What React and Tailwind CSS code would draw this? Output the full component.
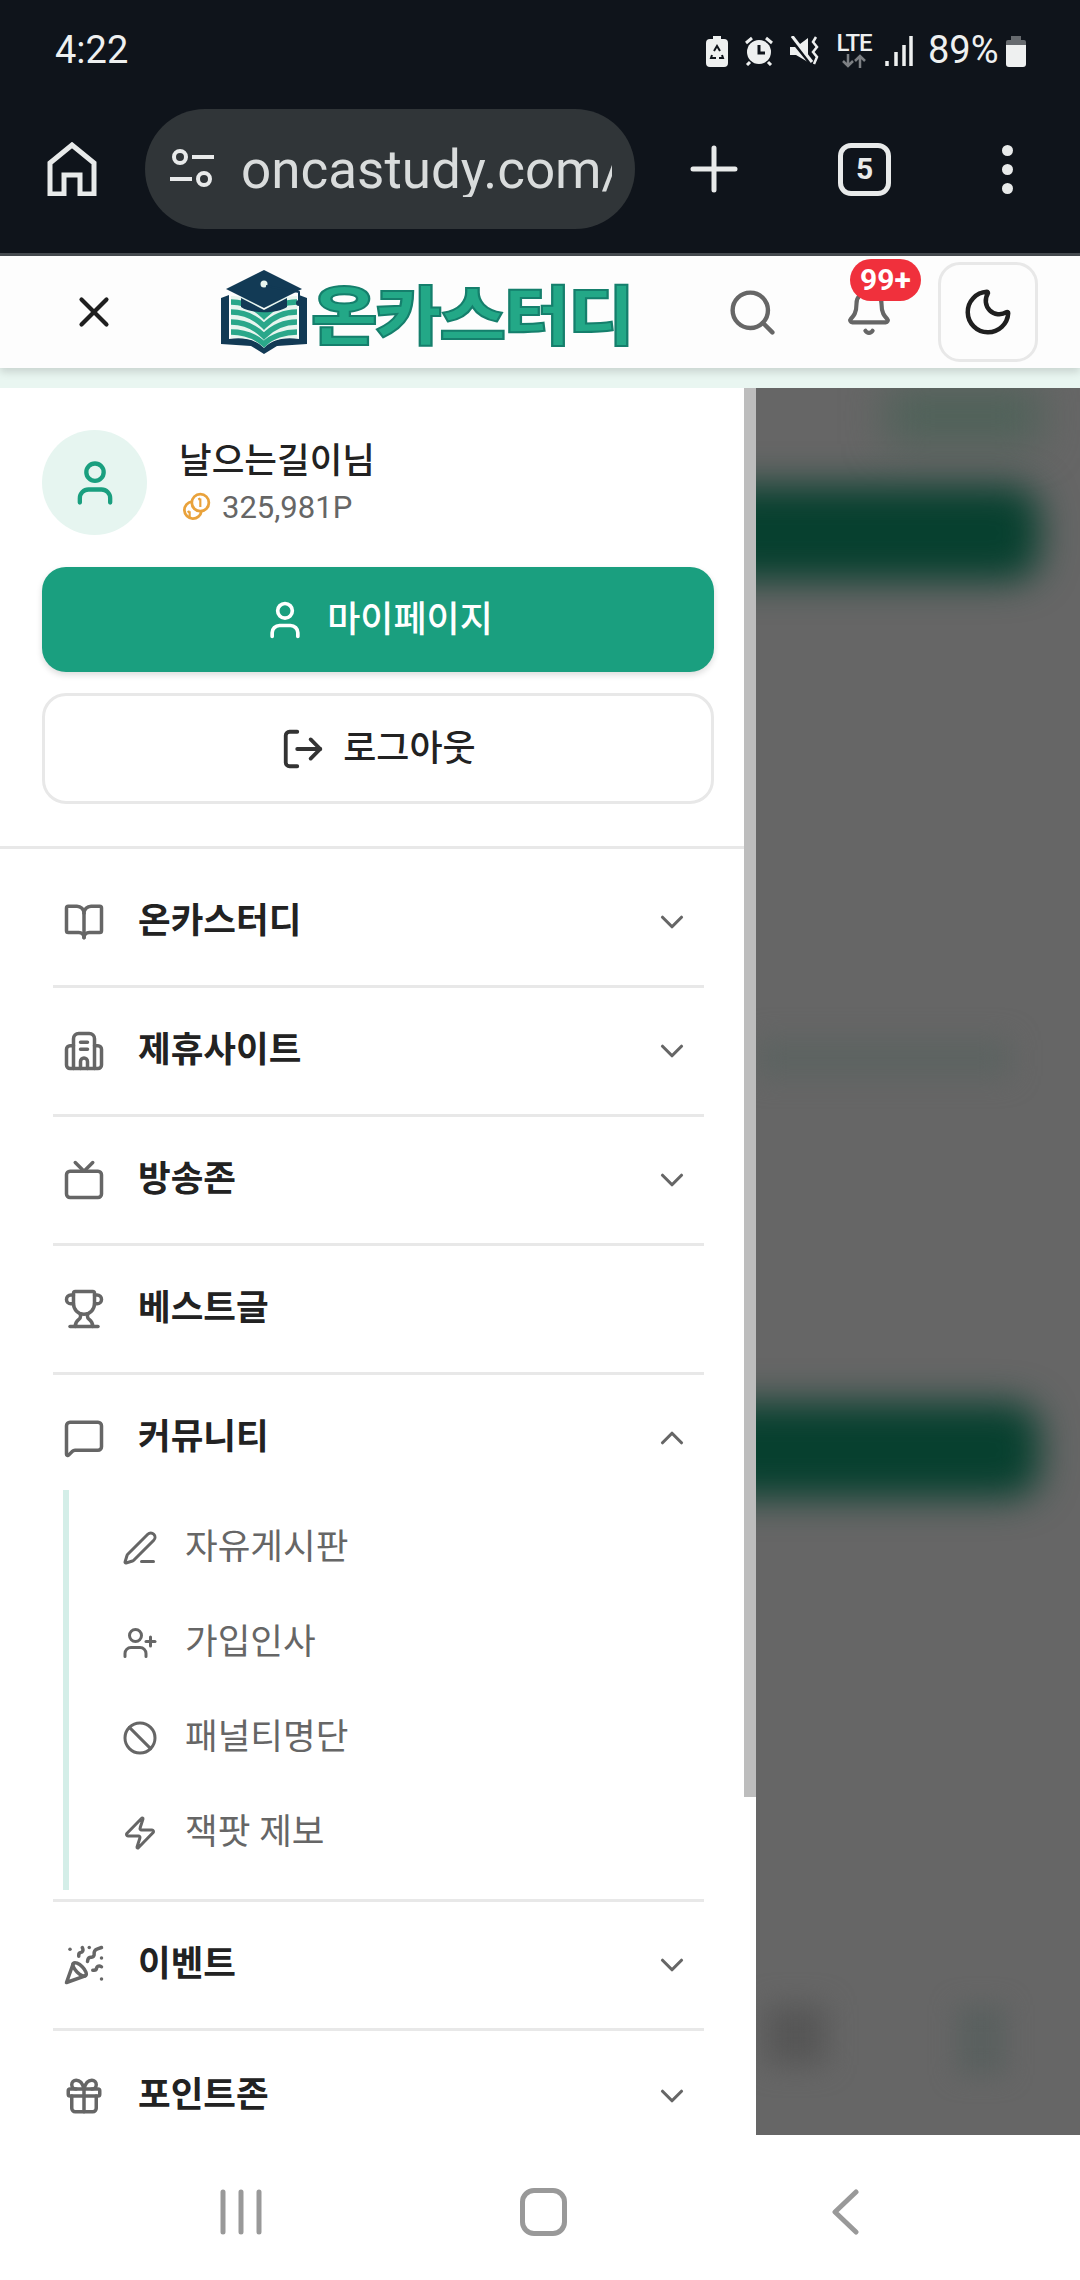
import {
  Ban,
  BookOpen,
  ChevronDown,
  ChevronUp,
  Gift,
  LogOut,
  MessageSquare,
  Moon,
  PartyPopper,
  PenLine,
  Search,
  Bell,
  Trophy,
  Tv,
  User,
  UserPlus,
  X,
  Zap,
} from "lucide-react";

const HotelIcon = ({ size, className }) => (
  <svg width={size} height={size} viewBox="0 0 24 24" fill="none" stroke="currentColor" strokeWidth="2" strokeLinecap="round" strokeLinejoin="round" className={className}>
    <path d="M6 22V5a3 3 0 0 1 3-3h6a3 3 0 0 1 3 3v17" />
    <path d="M6 9H4a2 2 0 0 0-2 2v9a2 2 0 0 0 2 2h16a2 2 0 0 0 2-2v-9a2 2 0 0 0-2-2h-2" />
    <path d="M10 7h4M10 11h4" />
    <path d="M10 22v-4a2 2 0 0 1 4 0v4" />
  </svg>
);

const menuTop = [
  { label: "온카스터디", icon: BookOpen, arrow: true },
  { label: "제휴사이트", icon: HotelIcon, arrow: true },
  { label: "방송존", icon: Tv, arrow: true },
  { label: "베스트글", icon: Trophy, arrow: false },
];

const subItems = [
  { label: "자유게시판", icon: PenLine },
  { label: "가입인사", icon: UserPlus },
  { label: "패널티명단", icon: Ban },
  { label: "잭팟 제보", icon: Zap },
];

function StatusBar() {
  return (
    <div className="h-[100px] flex items-center text-[38px] leading-none text-[#eef0f0] font-['Roboto',sans-serif]">
      <span className="ml-[55px]">4:22</span>
      <div className="ml-auto mr-[54px] flex items-center">
        {/* battery saver */}
        <svg width="22" height="31" viewBox="0 0 22 31" className="mt-[2px]">
          <path d="M7 0h8v3h3a4 4 0 0 1 4 4v20a4 4 0 0 1-4 4H4a4 4 0 0 1-4-4V7a4 4 0 0 1 4-4h3z" fill="#eef0f0" />
          <path d="M8 15l3-5 3 5M6 19l-1 3h5M16 19l1 3h-4" fill="none" stroke="#0f141b" strokeWidth="2" />
        </svg>
        {/* alarm */}
        <svg width="30" height="30" viewBox="0 0 30 30" className="ml-[16px] mt-[2px]">
          <circle cx="15" cy="16" r="12" fill="#eef0f0" />
          <path d="M15 9v8h6" fill="none" stroke="#0f141b" strokeWidth="3" />
          <path d="M2 7l6-5M28 7l-6-5M6 26l-3 3M24 26l3 3" stroke="#eef0f0" strokeWidth="3" />
        </svg>
        {/* mute / vibrate */}
        <svg width="30" height="30" viewBox="0 0 30 30" className="ml-[16px] mt-[2px]">
          <path d="M0 11h6l12-9v24L6 19H0z" fill="#eef0f0" />
          <path d="M1 2l21 26" stroke="#0f141b" strokeWidth="5" />
          <path d="M2 0l20 26" stroke="#eef0f0" strokeWidth="3" />
          <path d="M26 1l-3 5 4 5-4 5 4 5-3 7" fill="none" stroke="#eef0f0" strokeWidth="2.5" />
        </svg>
        <div className="ml-[14px] w-[40px] flex flex-col items-center">
          <span className="text-[24px] leading-[22px] font-medium tracking-[-1px]">LTE</span>
          <svg width="26" height="14" viewBox="0 0 26 14">
            <path d="M7 0v12M2 7l5 5 5-5M19 14V2M14 7l5-5 5 5" fill="none" stroke="#7d8084" strokeWidth="2.5" />
          </svg>
        </div>
        <svg width="28" height="30" viewBox="0 0 28 30" className="ml-[11px] mt-[2px]">
          <path d="M2 25v5M11 16v14M19 9v21M26 0v30" stroke="#eef0f0" strokeWidth="3.5" />
        </svg>
        <span className="ml-[15px] w-[72px]">89%</span>
        <svg width="20" height="31" viewBox="0 0 20 31" className="ml-[6px] mt-[2px]">
          <path d="M5 0h10v4H5z" fill="#666a6e" />
          <path d="M2 4h16a2 2 0 0 1 2 2v3H0V6a2 2 0 0 1 2-2z" fill="#666a6e" />
          <path d="M0 9h20v19a3 3 0 0 1-3 3H3a3 3 0 0 1-3-3z" fill="#eef0f0" />
        </svg>
      </div>
    </div>
  );
}

function BrowserBar() {
  return (
    <div className="mt-[9px] h-[120px] flex items-center text-[#e8eaea]">
      <svg width="50" height="54" viewBox="0 0 50 54" fill="none" stroke="currentColor" strokeWidth="5" className="ml-[47px]">
        <path d="M3 52V21L25 3l22 18v31H33V33H17v19z" />
      </svg>
      <div className="ml-[48px] w-[490px] h-[120px] rounded-full bg-[#303538] flex items-center">
        <svg width="44" height="40" viewBox="0 0 44 40" fill="none" stroke="currentColor" strokeWidth="4" className="ml-[25px] shrink-0">
          <circle cx="10" cy="8" r="6" />
          <circle cx="34" cy="30" r="6" />
          <path d="M22 8h22M0 30h22" />
        </svg>
        <div className="ml-[27px] w-[371px] overflow-hidden pt-[2px]">
          <span className="text-[53px] leading-none whitespace-nowrap text-[#d9dcdc] font-['Roboto',sans-serif]">oncastudy.com/</span>
        </div>
      </div>
      <svg width="48" height="48" viewBox="0 0 48 48" stroke="currentColor" strokeWidth="5" strokeLinecap="round" className="ml-[55px]">
        <path d="M24 3v42M3 24h42" />
      </svg>
      <div className="ml-[100px] w-[53px] h-[53px] rounded-[13px] border-[5px] border-[#e8eaea] flex items-center justify-center text-[30px] leading-none font-bold font-['Roboto',sans-serif]">
        5
      </div>
      <div className="ml-[111px] flex flex-col gap-[8px]">
        <div className="w-[11px] h-[11px] rounded-full bg-[#e8eaea]" />
        <div className="w-[11px] h-[11px] rounded-full bg-[#e8eaea]" />
        <div className="w-[11px] h-[11px] rounded-full bg-[#e8eaea]" />
      </div>
    </div>
  );
}

function Logo() {
  return (
    <div className="ml-[100px] w-[413px] h-[84px] flex items-center">
      <svg width="90" height="84" viewBox="0 0 90 84" className="shrink-0">
        {/* book */}
        <path d="M2 74V28l8-3v44c14-2 26 0 35 9 9-9 21-11 35-9V25l8 3v46l-30 2-13 8-13-8z" fill="#123a55" />
        <path d="M12 26c12 0 24 4 33 14 9-10 21-14 33-14v42c-13-1-25 1-33 9-8-8-20-10-33-9z" fill="#e8f5ef" />
        <path d="M12 32c12 0 24 5 33 14 9-9 21-14 33-14M12 42c12 0 24 5 33 14 9-9 21-14 33-14M12 52c12 0 24 5 33 14 9-9 21-14 33-14M12 62c12 0 24 4 33 12 8-8 21-12 33-12" fill="none" stroke="#2aa78a" strokeWidth="5.5" />
        {/* cap */}
        <path d="M45 0l38 19-38 19L7 19z" fill="#123a55" />
        <path d="M22 28v9c10 7 36 7 46 0v-9l-23 12z" fill="#123a55" />
        <circle cx="45" cy="14" r="3.5" fill="#e8f5ef" />
        <path d="M47 16l33 6v9" fill="none" stroke="#123a55" strokeWidth="2" />
        <circle cx="80" cy="33" r="3" fill="#123a55" />
      </svg>
      <span className="ml-[2px] mb-[2px] origin-left scale-x-[1.13] text-[64px] leading-none font-black tracking-[-2px] whitespace-nowrap text-[#23a887] [-webkit-text-stroke:2px_#157f6c] font-['Noto_Sans_CJK_KR',sans-serif]">
        온카스터디
      </span>
    </div>
  );
}

function SiteHeader() {
  return (
    <div className="relative z-10 h-[112px] bg-[#fdfdfd] flex items-center shadow-[0_4px_8px_rgba(0,0,0,0.14)] text-[#666666]">
      <X size={50} strokeWidth={2} className="ml-[69px] text-[#1f1f1f]" />
      <Logo />
      <Search size={53} strokeWidth={2} className="ml-[94px]" />
      <div className="relative ml-[65px] w-[50px] h-[50px]">
        <Bell size={50} strokeWidth={2} />
        <div className="absolute left-[6px] top-[-28px] w-[71px] h-[42px] rounded-full bg-[#f0303c] flex items-center justify-center text-white text-[30px] leading-none font-bold font-['Roboto',sans-serif]">
          99+
        </div>
      </div>
      <div className="ml-[44px] w-[100px] h-[100px] rounded-[22px] border-[3px] border-[#e8e8e8] flex items-center justify-center">
        <Moon size={54} strokeWidth={2} className="text-[#1f1f1f]" />
      </div>
    </div>
  );
}

function Profile() {
  return (
    <div className="pl-[42px] pr-[30px] pt-[42px] pb-[42px] border-b-[3px] border-[#e8e8e8]">
      <div className="flex items-center gap-[32px]">
        <div className="w-[105px] h-[105px] rounded-full bg-[#e6f5f0] flex items-center justify-center">
          <User size={52} strokeWidth={2} className="text-[#1a9f7f]" />
        </div>
        <div className="flex flex-col gap-[4px] pt-[1px]">
          <div className="text-[35.5px] leading-[46px] font-medium text-[#222222]">날으는길이님</div>
          <div className="flex items-center h-[40px] gap-[11px] text-[31px] text-[#666666] font-['Roboto',sans-serif]">
            <svg width="32" height="32" viewBox="0 0 30 30" fill="none" stroke="#e9a23b" strokeWidth="2.6">
              <circle cx="20" cy="10" r="8" />
              <path d="M20 6v8M18 7l2-1" strokeWidth="2" />
              <path d="M12 9a8 8 0 1 0 9 9" />
              <path d="M10 18v6M8 19l2-1" strokeWidth="2" />
            </svg>
            325,981P
          </div>
        </div>
      </div>
      <button className="mt-[32px] w-full h-[105px] rounded-[24px] bg-[#1a9f7f] shadow-[0_3px_6px_rgba(0,0,0,0.14)] flex items-center justify-center gap-[20px] text-[36px] font-medium text-white">
        <User size={44} strokeWidth={2} />
        마이페이지
      </button>
      <button className="mt-[21px] w-full h-[111px] rounded-[24px] border-[3px] border-[#e8e8e8] flex items-center justify-center gap-[17px] text-[36px] font-medium text-[#222222]">
        <LogOut size={46} strokeWidth={2} className="text-[#333333]" />
        로그아웃
      </button>
    </div>
  );
}

function MenuRow({ label, icon: Icon, arrow, open, last }) {
  return (
    <div className={`flex items-center ${open ? "h-[115px] pt-[10px]" : "h-[129px]"} ${!open && !last ? "border-b-[3px] border-[#e8e8e8]" : ""}`}>
      <Icon size={42} strokeWidth={2} className="ml-[10px] text-[#666666]" />
      <span className="ml-[33px] text-[35.5px] leading-none font-bold text-[#222222]">{label}</span>
      {open ? (
        <ChevronUp size={38} strokeWidth={2} className="ml-auto mr-[13px] text-[#666666]" />
      ) : arrow ? (
        <ChevronDown size={38} strokeWidth={2} className="ml-auto mr-[13px] text-[#666666]" />
      ) : null}
    </div>
  );
}

function Menu() {
  return (
    <div className="flex-1 min-h-0 overflow-hidden pl-[53px] pr-[40px] pt-[10px]">
      {menuTop.map((item) => (
        <MenuRow key={item.label} {...item} />
      ))}
      <MenuRow label="커뮤니티" icon={MessageSquare} open />
      <div className="ml-[10px] border-l-[6px] border-[#d4eee8] py-[10px]">
        {subItems.map(({ label, icon: Icon }) => (
          <div key={label} className="h-[95px] flex items-center pl-[53px] text-[#666666]">
            <Icon size={36} strokeWidth={2} />
            <span className="ml-[27px] text-[35.5px] leading-none">{label}</span>
          </div>
        ))}
      </div>
      <div className="mt-[9px] border-t-[3px] border-[#e8e8e8]">
        <MenuRow label="이벤트" icon={PartyPopper} arrow />
        <MenuRow label="포인트존" icon={Gift} arrow last />
      </div>
    </div>
  );
}

function Backdrop() {
  return (
    <div className="flex-1 min-w-0 overflow-hidden bg-[#666666] flex flex-col">
      <div className="h-[56px] ml-[130px] mr-[40px] bg-[#4f6259] blur-[20px]" />
      <div className="mt-[41px] h-[96px] -ml-[60px] mr-[40px] rounded-[30px] bg-[#07402f] blur-[18px]" />
      <div className="mt-[459px] h-[36px] mr-[70px] bg-[#5c6361] blur-[14px]" />
      <div className="mt-[326px] h-[96px] -ml-[60px] mr-[40px] rounded-[30px] bg-[#07402f] blur-[18px]" />
      <div className="mt-[507px] h-[70px] flex">
        <div className="ml-[10px] w-[60px] h-[60px] bg-[#565656] blur-[14px]" />
        <div className="ml-[130px] w-[50px] h-[70px] bg-[#5a605f] blur-[12px]" />
      </div>
    </div>
  );
}

function NavBar() {
  return (
    <div className="h-[145px] pt-[8px] bg-white flex items-center">
      <svg width="42" height="46" viewBox="0 0 42 46" stroke="#999999" strokeWidth="5" strokeLinecap="round" className="ml-[220px]">
        <path d="M3 3v40M21 3v40M39 3v40" />
      </svg>
      <div className="ml-[258px] w-[47px] h-[48px] rounded-[14px] border-[5px] border-[#999999]" />
      <svg width="27" height="46" viewBox="0 0 27 46" fill="none" stroke="#999999" strokeWidth="5" strokeLinecap="round" strokeLinejoin="round" className="ml-[265px]">
        <path d="M24 3L3 23l21 20" />
      </svg>
    </div>
  );
}

export default function App() {
  return (
    <div className="w-[1080px] h-[2280px] overflow-hidden flex flex-col bg-white font-['Roboto','Noto_Sans_CJK_KR',sans-serif]">
      {/* Browser chrome */}
      <div className="bg-[#0f141b] h-[253px]">
        <StatusBar />
        <BrowserBar />
      </div>
      <div className="h-[3px] bg-[#464b50]" />
      <SiteHeader />
      <div className="h-[20px] bg-[#e9f6f1]" />

      {/* Drawer + dimmed page */}
      <div className="flex-1 min-h-0 flex">
        <aside className="w-[744px] bg-white flex flex-col">
          <Profile />
          <Menu />
        </aside>
        <div className="w-[12px] bg-white">
          <div className="h-[1409px] bg-[#bdbdbd]" />
        </div>
        <Backdrop />
      </div>

      <NavBar />
    </div>
  );
}
